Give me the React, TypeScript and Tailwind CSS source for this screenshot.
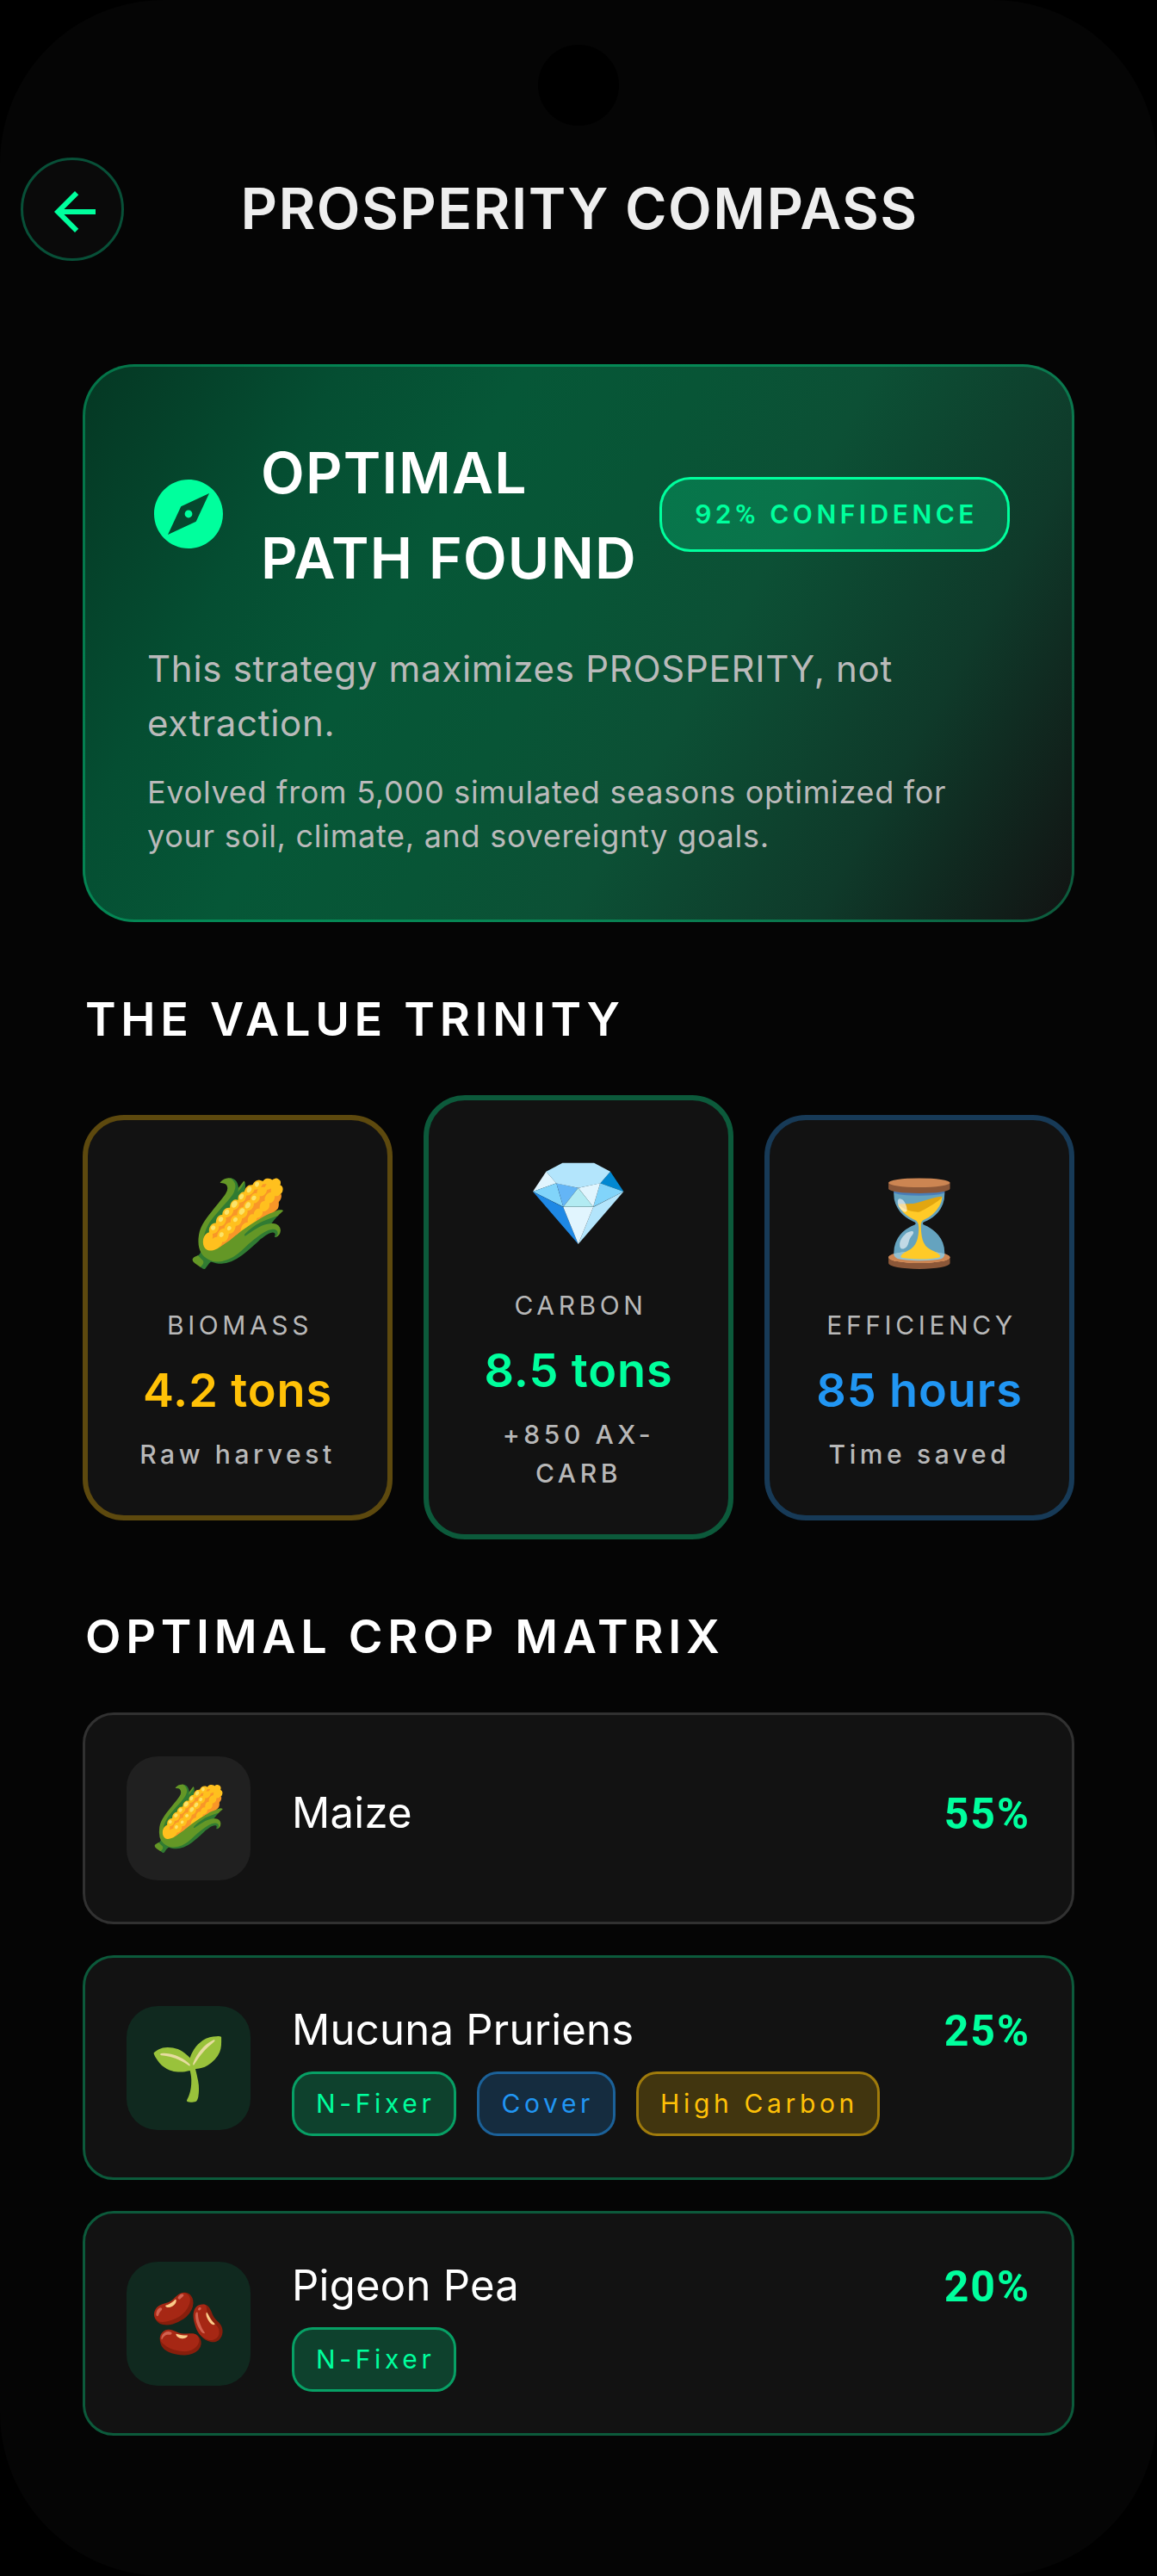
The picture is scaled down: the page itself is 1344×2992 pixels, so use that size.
import { ReactNode } from 'react';

interface Metric {
  icon: string;
  label: string;
  value: string;
  note: string;
  border: string;
  text: string;
}

interface Tag {
  label: string;
  style: string;
}

interface Crop {
  icon: string;
  name: string;
  share: string;
  companion: boolean;
  tags: Tag[];
}

const N_FIXER: Tag = { label: 'N-Fixer', style: 'text-[#00ff9d] border-[#00ff9d]/60 bg-[#00ff9d]/20' };
const COVER: Tag = { label: 'Cover', style: 'text-[#2196f3] border-[#2196f3]/60 bg-[#2196f3]/20' };
const HIGH_CARBON: Tag = { label: 'High Carbon', style: 'text-[#ffc107] border-[#ffc107]/60 bg-[#ffc107]/20' };

const METRICS: Metric[] = [
  {
    icon: '🌽',
    label: 'BIOMASS',
    value: '4.2 tons',
    note: 'Raw harvest',
    border: 'border-[#5d490e]',
    text: 'text-[#ffc107]',
  },
  {
    icon: '💎',
    label: 'CARBON',
    value: '8.5 tons',
    note: '+850 AX-CARB',
    border: 'border-[#0c5a3b]',
    text: 'text-[#00ff9d]',
  },
  {
    icon: '⏳',
    label: 'EFFICIENCY',
    value: '85 hours',
    note: 'Time saved',
    border: 'border-[#173a57]',
    text: 'text-[#2196f3]',
  },
];

const CROPS: Crop[] = [
  { icon: '🌽', name: 'Maize', share: '55%', companion: false, tags: [] },
  { icon: '🌱', name: 'Mucuna Pruriens', share: '25%', companion: true, tags: [N_FIXER, COVER, HIGH_CARBON] },
  { icon: '🫘', name: 'Pigeon Pea', share: '20%', companion: true, tags: [N_FIXER] },
];

function SectionTitle({ children }: { children: ReactNode }) {
  return (
    <h2 className="mt-[72px] mb-12 pl-[3px] text-[54px] leading-[81px] font-semibold tracking-[5.7px] text-white">
      {children}
    </h2>
  );
}

function MetricCard({ metric }: { metric: Metric }) {
  return (
    <div
      className={`flex flex-1 flex-col items-center rounded-[48px] border-[6px] bg-[#121212] px-9 py-12 text-center ${metric.border}`}
    >
      <span className="-mt-0.5 mb-[26px] text-[96px] leading-[144px]">{metric.icon}</span>
      <span className="pl-[5px] text-[30px] leading-[45px] tracking-[4.6px] text-[#b8b8b8]">{metric.label}</span>
      <span className={`my-3 text-[54px] leading-[81px] font-semibold tracking-[0.9px] whitespace-nowrap ${metric.text}`}>
        {metric.value}
      </span>
      <span className="text-[30px] leading-[45px] font-medium tracking-[4.6px] text-[#b8b8b8]">{metric.note}</span>
    </div>
  );
}

function CropRow({ crop }: { crop: Crop }) {
  return (
    <div
      className={`flex items-center gap-12 rounded-[36px] border-[3px] bg-[#121212] p-12 ${
        crop.companion ? 'border-[#0c5a3b]' : 'border-[#313131]'
      }`}
    >
      <div
        className={`flex size-36 shrink-0 items-center justify-center rounded-[36px] text-[72px] leading-[108px] ${
          crop.companion ? 'bg-[#10291f]' : 'bg-[#202020]'
        }`}
      >
        <span className="-mt-0.5">{crop.icon}</span>
      </div>
      <div className="flex flex-1 flex-col gap-3">
        <div className="flex justify-between leading-[72px]">
          <span className="text-[49px] tracking-[0.25px] text-white">{crop.name}</span>
          <span className="translate-y-px font-[Roboto] text-[50px] font-bold tracking-[2px] text-[#00ff9d]">
            {crop.share}
          </span>
        </div>
        <div className="flex gap-6">
          {crop.tags.map((tag) => (
            <span
              key={tag.label}
              className={`rounded-3xl border-[3px] bg-clip-padding py-3 pr-[22px] pl-[25px] text-[30px] leading-[45px] tracking-[4.65px] ${tag.style}`}
            >
              {tag.label}
            </span>
          ))}
        </div>
      </div>
    </div>
  );
}

export default function App() {
  return (
    <div className="h-[2992px] w-[1344px] bg-black font-['Inter','Noto_Color_Emoji',sans-serif]">
      <div className="relative h-full overflow-hidden rounded-[190px] bg-[#050505] pt-[183px]">
        {/* camera cutout */}
        <div className="absolute top-[52px] left-[625px] size-[94px] rounded-full bg-black" />

        <header className="grid h-[120px] grid-cols-[120px_1fr_120px] items-center px-6">
          <button className="flex size-[120px] items-center justify-center rounded-full border-[3px] border-[#085038] bg-[#0a0a0a]">
            <svg viewBox="0 0 24 24" className="size-[72px] translate-[3px] fill-[#00ff9d]">
              <path d="M20 11H7.83l5.59-5.59L12 4l-8 8 8 8 1.41-1.41L7.83 13H20v-2z" />
            </svg>
          </button>
          <h1 className="-mt-0.5 pl-0.5 text-center text-[66px] leading-[99px] font-semibold tracking-[1.4px] text-[#eeeeee]">
            PROSPERITY COMPASS
          </h1>
        </header>

        <main className="px-24 pt-[120px]">
          <section className="h-[648px] rounded-[60px] border-[3px] border-[#00ff9d]/30 bg-[linear-gradient(119.4deg,#053723_0%,#054e32_20%,#065737_34%,#085536_48%,#0c5035_61%,#0f3a2a_80%,#121212_100%)] bg-origin-border p-[72px]">
            <div className="flex items-center">
              <svg viewBox="0 0 24 24" className="mr-9 size-24 shrink-0 fill-[#00ff9d]">
                <path d="M12 10.9c-.61 0-1.1.49-1.1 1.1s.49 1.1 1.1 1.1c.61 0 1.1-.49 1.1-1.1s-.49-1.1-1.1-1.1zM12 2C6.48 2 2 6.48 2 12s4.48 10 10 10 10-4.48 10-10S17.52 2 12 2zm2.19 12.19L6 18l3.81-8.19L18 6l-3.81 8.19z" />
              </svg>
              <h2 className="flex-1 translate-y-0.5 text-[66px] leading-[99px] font-semibold tracking-[1.2px] text-white">
                OPTIMAL
                <br />
                PATH FOUND
              </h2>
              <span className="shrink-0 rounded-[36px] border-[3px] border-[#00ff9d] bg-[#00ff9d]/20 py-[18px] pr-[34px] pl-[38px] text-[30px] leading-[45px] font-semibold tracking-[4.5px] text-[#00ff9d]">
                92<span className="font-[Roboto] text-[32px] leading-none">%</span> CONFIDENCE
              </span>
            </div>
            <p className="mt-[49px] text-[42px] leading-[63px] tracking-[0.72px] text-[#bababa]">
              This strategy maximizes PROSPERITY, not
              <br />
              extraction.
            </p>
            <p className="mt-6 text-4xl leading-[51px] tracking-[0.72px] text-[#bababa]">
              Evolved from 5,000 simulated seasons optimized for
              <br />
              your soil, climate, and sovereignty goals.
            </p>
          </section>

          <SectionTitle>THE VALUE TRINITY</SectionTitle>
          <div className="flex items-center gap-9">
            {METRICS.map((metric) => (
              <MetricCard key={metric.label} metric={metric} />
            ))}
          </div>

          <SectionTitle>OPTIMAL CROP MATRIX</SectionTitle>
          <div className="flex flex-col gap-9">
            {CROPS.map((crop) => (
              <CropRow key={crop.name} crop={crop} />
            ))}
          </div>
        </main>
      </div>
    </div>
  );
}
